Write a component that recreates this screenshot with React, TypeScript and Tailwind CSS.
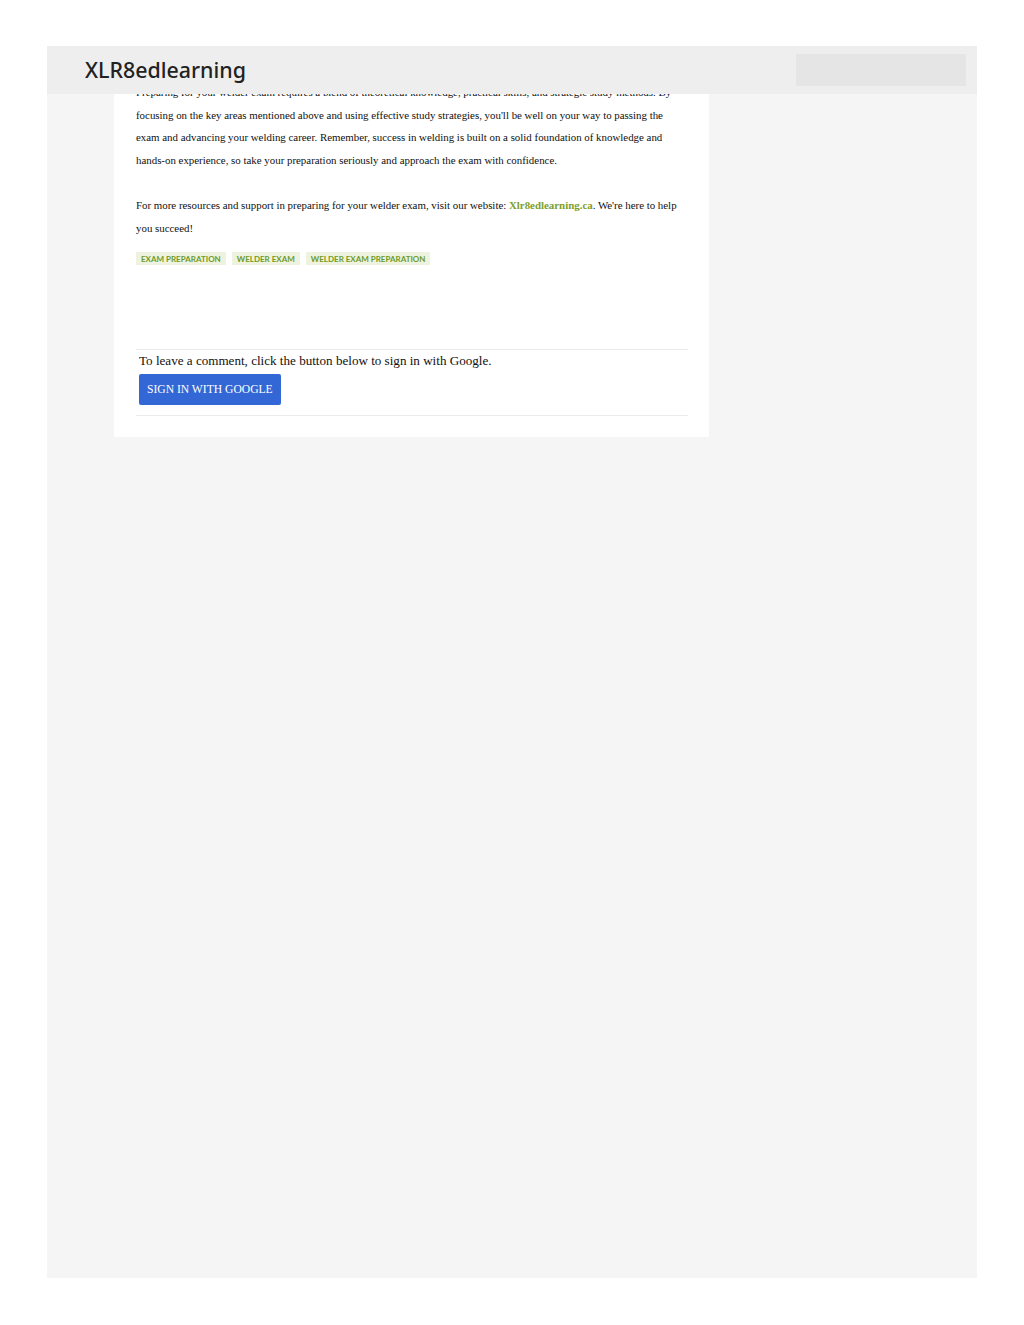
import React from "react";

export default function App() {
  return (
    <div className="min-h-[1325px] bg-white pt-[46px]">
      <div className="ml-[47px] w-[930px] h-[1232px] bg-[#f5f5f5] flex flex-col">
        <header className="h-[48px] bg-[#eeeeee] flex items-center justify-between pl-[38px] pr-[11px] shrink-0">
          <div
            className="text-[21.4px] font-medium text-[#222222]"
            style={{ fontFamily: '"Noto Sans", "Open Sans", sans-serif' }}
          >
            XLR8edlearning
          </div>
          <div className="w-[170px] h-[32px] bg-[#e5e5e5]" />
        </header>
        <div className="pl-[67px]">
          <div className="w-[595px] bg-white pb-[21px]">
            <div className="h-[78px] overflow-hidden">
              <div
                className="-mt-[13px] px-[22px] text-[10.88px] leading-[22.5px] text-[#111111]"
                style={{ fontFamily: '"Liberation Serif", "Times New Roman", serif' }}
              >
                <p>
                  Preparing for your welder exam requires a blend of theoretical knowledge, practical skills, and strategic study methods. By
                  focusing on the key areas mentioned above and using effective study strategies, you'll be well on your way to passing the
                  exam and advancing your welding career. Remember, success in welding is built on a solid foundation of knowledge and
                  hands-on experience, so take your preparation seriously and approach the exam with confidence.
                </p>
              </div>
            </div>
            <div
              className="px-[22px] pt-[22px] text-[10.88px] leading-[22.5px] text-[#111111]"
              style={{ fontFamily: '"Liberation Serif", "Times New Roman", serif' }}
            >
              <p>
                For more resources and support in preparing for your welder exam, visit our website:{" "}
                <a className="font-bold text-[#7da02b]">Xlr8edlearning.ca</a>. We're here to help you succeed!
              </p>
            </div>
            <div
              className="px-[22px] mt-[13px] flex gap-[6px]"
              style={{ fontFamily: 'Lato, "Noto Sans", sans-serif' }}
            >
              {["EXAM PREPARATION", "WELDER EXAM", "WELDER EXAM PREPARATION"].map((t) => (
                <span
                  key={t}
                  className="h-[13px] px-[5px] flex items-center bg-[#eef3e0] text-[#6f9a25] text-[8px] font-bold"
                >
                  {t}
                </span>
              ))}
            </div>
            <div className="ml-[22px] mr-[21px] mt-[84px] border-t border-[#ebebeb]">
              <div
                className="pl-[3px] pt-[2px] pb-[10px] text-[#111111]"
                style={{ fontFamily: '"Liberation Serif", "Times New Roman", serif' }}
              >
                <p className="text-[13.1px] leading-[18px]">To leave a comment, click the button below to sign in with Google.</p>
                <button className="mt-[4px] h-[31px] px-[8px] bg-[#3367d6] rounded-[2px] text-white text-[11.6px]">
                  SIGN IN WITH GOOGLE
                </button>
              </div>
              <div className="border-t border-[#ebebeb]" />
            </div>
          </div>
        </div>
      </div>
    </div>
  );
}
